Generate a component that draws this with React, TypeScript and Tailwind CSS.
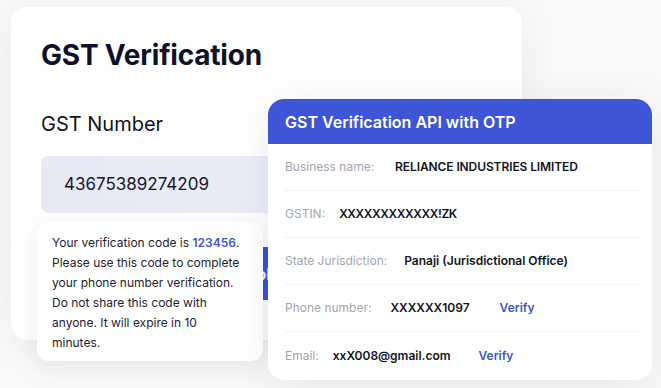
import React from 'react'

const rows = [
  { label: 'Business name:', value: 'RELIANCE INDUSTRIES LIMITED', gap: 'gap-[21px]', track: 'tracking-[-0.1px]' },
  { label: 'GSTIN:', value: 'XXXXXXXXXXXX!ZK', gap: 'gap-[14px]', track: 'tracking-[-0.4px]' },
  { label: 'State Jurisdiction:', value: 'Panaji (Jurisdictional Office)', gap: 'gap-[17px]', track: '' },
  { label: 'Phone number:', value: 'XXXXXX1097', gap: 'gap-[19px]', track: '', verify: 'ml-[11px]' },
  { label: 'Email:', value: 'xxX008@gmail.com', gap: 'gap-[14px]', track: '', verify: 'ml-[14px]' },
]

const App = () => {
  return (
    <div className="relative w-[661px] h-[388px] overflow-hidden bg-[#f9f9fa] font-['Inter',sans-serif]">
      {/* main form card */}
      <div className="ml-[11px] mt-[7px] w-[511px] h-[333px] rounded-2xl bg-white shadow-[0_4px_40px_rgba(20,20,40,0.06)] px-[30px] pt-[34px]">
        <h1 className="text-[28px] leading-none font-bold text-[#0f1129] tracking-[-0.2px]">GST Verification</h1>
        <p className="mt-[45px] text-[20px] leading-none text-[#111322]">GST Number</p>
        <div className="mt-[22px] h-[57px] rounded-lg bg-gradient-to-r from-[#e7e9f6] to-[#eef0f9] flex items-center pl-[23px] text-[17px] text-[#15172a]">
          43675389274209
        </div>
        <button className="mt-[34px] w-full h-[53px] rounded-lg bg-[#3d55d6] text-white text-[16px] font-semibold">
          Lookup
        </button>
      </div>

      {/* SMS popup */}
      <div className="absolute left-[37px] top-[222px] w-[226px] h-[139px] rounded-xl bg-white shadow-[0_6px_30px_rgba(20,20,40,0.08)] px-[15px] pt-[11px] text-[12px] leading-[20px] text-[#1f2230]">
        Your verification code is <span className="font-semibold text-[#3d55d6]">123456</span>.
        <br />
        Please use this code to complete
        <br />
        your phone number verification.
        <br />
        Do not share this code with
        <br />
        anyone. It will expire in 10
        <br />
        minutes.
      </div>

      {/* API result card */}
      <div className="absolute left-[268px] top-[99px] w-[384px] h-[281px] rounded-2xl bg-white shadow-[0_6px_40px_rgba(20,20,40,0.08)] overflow-hidden">
        <div className="h-[45px] bg-[#3d55d6] flex items-center px-[17px] text-white text-[16px] font-semibold">
          GST Verification API with OTP
        </div>
        <div className="pl-[17px] pr-[12px]">
          {rows.map((r, i) => (
            <div
              key={r.label}
              className={`h-[47px] flex items-center ${r.gap} text-[12px] ${i < rows.length - 1 ? 'border-b border-[#f1f1f4]' : ''}`}
            >
              <span className="text-[#a3a5ad]">{r.label}</span>
              <span className={`font-semibold text-[#111322] ${r.track}`}>{r.value}</span>
              {r.verify && <span className={`${r.verify} font-semibold text-[#3d55d6]`}>Verify</span>}
            </div>
          ))}
        </div>
      </div>
    </div>
  )
}

export default App
